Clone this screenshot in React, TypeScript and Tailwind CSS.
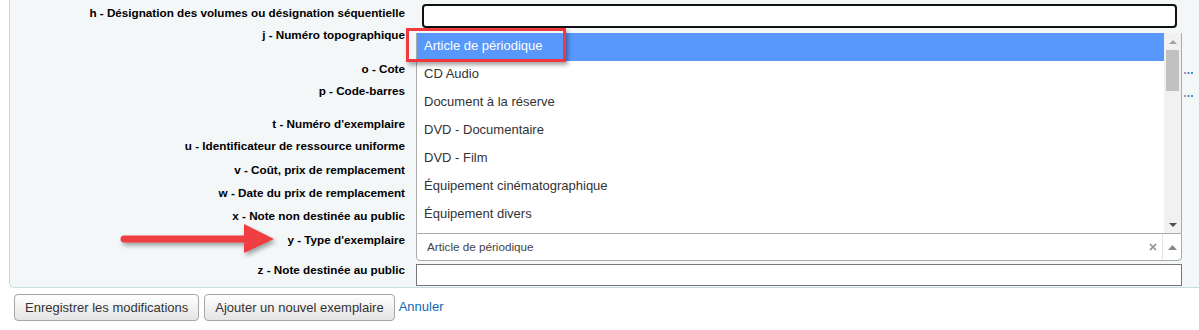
import React from 'react';

const labels: { text: string; h: string }[] = [
  { text: 'h - Désignation des volumes ou désignation séquentielle', h: 'h-[22px]' },
  { text: 'j - Numéro topographique', h: 'h-[34px]' },
  { text: 'o - Cote', h: 'h-[22px]' },
  { text: 'p - Code-barres', h: 'h-[33px]' },
  { text: "t - Numéro d'exemplaire", h: 'h-[22px]' },
  { text: 'u - Identificateur de ressource uniforme', h: 'h-[24px]' },
  { text: 'v - Coût, prix de remplacement', h: 'h-[23px]' },
  { text: 'w - Date du prix de remplacement', h: 'h-[23px]' },
  { text: 'x - Note non destinée au public', h: 'h-[24px]' },
  { text: "y - Type d'exemplaire", h: 'h-[30px]' },
  { text: 'z - Note destinée au public', h: 'h-[22px]' },
];

const options = [
  'Article de périodique',
  'CD Audio',
  'Document à la réserve',
  'DVD - Documentaire',
  'DVD - Film',
  'Équipement cinématographique',
  'Équipement divers',
];

const Dots = () => (
  <svg width="9" height="2" viewBox="0 0 9 2" className="block">
    <rect x="0" y="0" width="2" height="2" fill="#c48bb0" />
    <rect x="3.5" y="0" width="2" height="2" fill="#3f8fd2" />
    <rect x="7" y="0" width="2" height="2" fill="#3f8fd2" />
  </svg>
);

const App: React.FC = () => {
  return (
    <div className="relative w-[1199px] h-[330px] overflow-hidden bg-white font-['Liberation_Sans',Arial,sans-serif]">
      {/* fieldset */}
      <div className="ml-[9px] h-[288px] bg-[#f4f7f8] border-l border-b border-[#c8dbe0] rounded-bl-[5px] flex">
        {/* labels */}
        <div className="w-[395px] pt-[6px] flex flex-col items-end">
          {labels.map((l) => (
            <div key={l.text} className={`${l.h} text-[11.7px] leading-[14px] font-bold text-black whitespace-nowrap`}>
              {l.text}
            </div>
          ))}
        </div>

        {/* controls */}
        <div className="ml-[11px] w-[766px] flex flex-col">
          <div className="mt-[4px] ml-[6px] w-[755px] h-[24px] bg-white border-2 border-[#111] rounded-[4px]" />

          <div className="mt-[5px] h-[200px] bg-white border-x border-[#aaa] flex overflow-hidden">
            <div className="flex-1 flex flex-col">
              {options.map((o, i) => (
                <div
                  key={o}
                  className={`h-[28px] shrink-0 flex items-center pl-[7px] text-[13px] ${
                    i === 0 ? 'bg-[#5897fb] text-white' : 'text-[#333]'
                  }`}
                >
                  <span className="-mt-[2px]">{o}</span>
                </div>
              ))}
            </div>
            <div className="w-[17px] bg-[#f1f1f1] flex flex-col items-center">
              <div className="h-[17px] flex items-center justify-center">
                <svg width="8" height="4" viewBox="0 0 8 4"><path d="M0 4 L4 0 L8 4 Z" fill="#a3a3a3" /></svg>
              </div>
              <div className="w-[13px] h-[41px] bg-[#c1c1c1]" />
              <div className="flex-1" />
              <div className="h-[17px] flex items-center justify-center">
                <svg width="8" height="4" viewBox="0 0 8 4"><path d="M0 0 L8 0 L4 4 Z" fill="#505050" /></svg>
              </div>
            </div>
          </div>

          <div className="h-[28px] bg-white border border-[#aaa] rounded-b-[4px] flex items-center">
            <span className="flex-1 pl-[10px] text-[11.7px] text-[#444]">Article de périodique</span>
            <span className="w-[10px] flex items-center justify-center mr-[4px]">
              <svg width="8" height="8" viewBox="0 0 8 8">
                <path d="M1 1 L7 7 M7 1 L1 7" stroke="#7d8a99" strokeWidth="1.6" />
                <path d="M2.5 2.5 L5.5 5.5" stroke="#e0a060" strokeWidth="0.8" />
              </svg>
            </span>
            <span className="w-[19px] h-full border-l border-[#e4e4e4] flex items-center justify-center">
              <svg width="9" height="5" viewBox="0 0 9 5"><path d="M0 5 L4.5 0 L9 5 Z" fill="#888" /></svg>
            </span>
          </div>

          <div className="mt-[3px] h-[22px] bg-white border border-[#767676]" />
        </div>

        {/* truncated controls on the right */}
        <div className="flex-1 pl-[2px] pt-[72px] flex flex-col gap-[21px]">
          <Dots />
          <Dots />
        </div>
      </div>

      {/* actions */}
      <div className="mt-[6px] pl-[14px] flex items-center">
        <button className="h-[27px] px-[10px] border border-[#a6a6a6] rounded-[4px] bg-gradient-to-b from-white to-[#e4e4e4] text-[13px] text-[#333] leading-none">
          Enregistrer les modifications
        </button>
        <button className="ml-[5px] h-[27px] px-[10px] border border-[#a6a6a6] rounded-[4px] bg-gradient-to-b from-white to-[#e4e4e4] text-[13px] text-[#333] leading-none">
          Ajouter un nouvel exemplaire
        </button>
        <a className="ml-[4px] text-[13px] text-[#0a6ab8] -mt-[1px]">Annuler</a>
      </div>

      {/* annotation: highlight box */}
      <div className="absolute left-[406px] top-[28px] w-[160px] h-[34px] border-[3px] border-[#f0393e] shadow-[2px_3px_4px_rgba(0,0,0,0.35)]" />

      {/* annotation: arrow */}
      <svg
        className="absolute left-[110px] top-[218px]"
        width="175"
        height="45"
        viewBox="0 0 175 45"
        style={{ filter: 'drop-shadow(2px 3px 2px rgba(0,0,0,0.35))' }}
      >
        <line x1="14" y1="21" x2="138" y2="21" stroke="#ef3e42" strokeWidth="7" strokeLinecap="round" />
        <path d="M134 6 L164 21 L134 35 Z" fill="#ef3e42" />
      </svg>
    </div>
  );
};

export default App;
